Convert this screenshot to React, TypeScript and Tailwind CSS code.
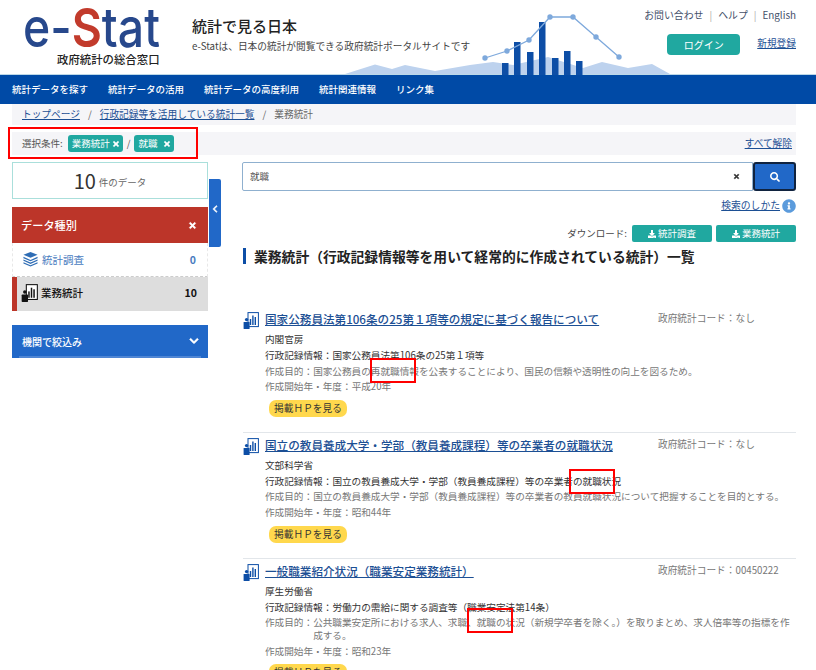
import { FaChevronDown, FaChevronLeft, FaDownload, FaInfoCircle, FaSearch, FaTimes } from 'react-icons/fa';

const navItems = ['統計データを探す', '統計データの活用', '統計データの高度利用', '統計関連情報', 'リンク集'];

const results = [
  {
    title: '国家公務員法第106条の25第１項等の規定に基づく報告について',
    code: 'なし',
    org: '内閣官房',
    info: '国家公務員法第106条の25第１項等',
    purpose: '国家公務員の再就職情報を公表することにより、国民の信頼や透明性の向上を図るため。',
    start: '平成20年',
  },
  {
    title: '国立の教員養成大学・学部（教員養成課程）等の卒業者の就職状況',
    code: 'なし',
    org: '文部科学省',
    info: '国立の教員養成大学・学部（教員養成課程）等の卒業者の就職状況',
    purpose: '国立の教員養成大学・学部（教員養成課程）等の卒業者の教員就職状況について把握することを目的とする。',
    start: '昭和44年',
  },
  {
    title: '一般職業紹介状況（職業安定業務統計）',
    code: '00450222',
    org: '厚生労働省',
    info: '労働力の需給に関する調査等（職業安定法第14条）',
    purpose: '公共職業安定所における求人、求職、就職の状況（新規学卒者を除く。）を取りまとめ、求人倍率等の指標を作成する。',
    start: '昭和23年',
  },
];

function HeaderChart() {
  const line = [[485, 58], [507, 51], [529, 40], [550, 17], [573, 17], [596, 37], [619, 57]];
  const bars = [[502, 63], [514, 42], [527, 52], [539, 22], [552, 58], [564, 51], [576, 61]];
  return (
    <svg className="absolute left-[340px] top-0 h-[75px] w-[340px]" viewBox="340 0 340 75">
      <polygon
        points="345,74 375,64.5 392,69 405,65 435,71 470,65 493,62 513,65 548,57 567,63 583,68 602,62 628,68 652,64 670,74"
        fill="#bdd2ee"
      />
      {bars.map(([x, y]) => (
        <rect key={x} x={x} y={y} width="6.5" height={75 - y} fill="#0d4ea6" />
      ))}
      <polyline points={line.map((p) => p.join(',')).join(' ')} fill="none" stroke="#7ea9dc" strokeWidth="1.3" />
      {line.map(([x, y]) => (
        <circle key={x} cx={x} cy={y} r="2.7" fill="#7ea9dc" />
      ))}
    </svg>
  );
}

// one text squeezed to the width of the real e-Stat mark
function Logo() {
  return (
    <svg viewBox="0 0 168 50" className="h-[50px] w-[168px]" style={{ fontFamily: '"Inter", sans-serif' }}>
      <text x="-1" y="47" fontSize="54" fontWeight="500" fill="#27488c" textLength="137" lengthAdjust="spacingAndGlyphs">
        e-<tspan fill="#c23b2c" fontWeight="600">S</tspan>tat
      </text>
    </svg>
  );
}

function StackIcon() {
  return (
    <svg viewBox="0 0 18 17" className="h-[15px] w-[17px]" fill="#2f6db5">
      <polygon points="9,0 17,3 9,6.5 1,3" />
      <path d="M1 5.5 L9 9 L17 5.5 V7 L9 10.5 L1 7Z" />
      <path d="M1 8.5 L9 12 L17 8.5 V10 L9 13.5 L1 10Z" />
      <path d="M1 11.5 L9 15 L17 11.5 V13 L9 16.5 L1 13Z" />
    </svg>
  );
}

function BizIcon({ color, frame, big }: { color: string; frame: string; big?: boolean }) {
  return (
    <svg viewBox="0 0 16 17" className={big ? 'h-[18px] w-[17px]' : 'h-[17px] w-[16px]'}>
      <rect x="5" y="0.6" width="10.4" height="14" fill="#fff" stroke={frame} strokeWidth="1" />
      <rect x="6.8" y="7" width="1.4" height="6" fill={color} />
      <rect x="9.2" y="3.5" width="1.4" height="9.5" fill={color} />
      <rect x="11.6" y="5" width="1.4" height="8" fill={color} />
      <circle cx="3.6" cy="7.6" r="1.7" fill={color} />
      <rect x="0.6" y="10" width="6" height="7" rx="0.6" fill={color} />
    </svg>
  );
}

function Tag({ label, width }: { label: string; width: string }) {
  return (
    <span className={`flex h-[17px] items-center justify-between rounded-[3px] bg-[#20a8a0] pl-[4px] pr-[3px] text-[9.5px] text-white ${width}`}>
      {label}
      <FaTimes className="h-[8px] w-[8px] stroke-current stroke-[30]" />
    </span>
  );
}

function ResultRow({ item }: { item: (typeof results)[number] }) {
  return (
    <div className="flex border-b border-[#e2e6ea] pt-[4px] pb-[15px]">
      <div className="w-[22px] shrink-0 pt-[1px]">
        <BizIcon color="#0d4ea6" frame="#0d4ea6" />
      </div>
      <div className="min-w-0 flex-1">
        <div className="flex h-[18px] items-center">
          <a className="flex-1 text-[11.6px] font-medium text-[#1c4f94] underline">{item.title}</a>
          <span className="mb-[3px] w-[138px] shrink-0 text-[9.7px] text-[#777]">政府統計コード：{item.code}</span>
        </div>
        <div className="mt-[3px] text-[9.65px] leading-[13px] text-[#333]">
          <p className="py-[1.35px]">{item.org}</p>
          <p className="py-[1.35px]">行政記録情報：{item.info}</p>
          <div className="flex py-[1.35px] text-[#777]">
            <span className="shrink-0">作成目的：</span>
            <span>{item.purpose}</span>
          </div>
          <p className="py-[1.35px] text-[#777]">作成開始年・年度：{item.start}</p>
        </div>
        <a className="ml-[4px] mt-[5px] flex h-[17px] w-[78px] items-center justify-center rounded-[7px] bg-[#ffd84d] text-[9.7px] text-[#333]">
          掲載ＨＰを見る
        </a>
      </div>
    </div>
  );
}

export default function App() {
  return (
    <div
      className="relative h-[670px] w-[816px] overflow-hidden bg-white text-[#333]"
      style={{ fontFamily: '"Noto Sans CJK JP", sans-serif' }}
    >
      {/* Header */}
      <header className="relative flex h-[75px] border-b border-[#bcd8e8]">
        <HeaderChart />
        <div className="ml-[24px] w-[168px]">
          <Logo />
          <div className="ml-[33px] mt-[2px] text-[11.4px] font-medium leading-[14px] text-[#222]">政府統計の総合窓口</div>
        </div>
        <div className="relative pt-[17px]">
          <h1 className="text-[15px] font-medium leading-[18px] text-[#222]">統計で見る日本</h1>
          <p className="mt-[5px] text-[9.7px] leading-[12px] text-[#444]">e-Statは、日本の統計が閲覧できる政府統計ポータルサイトです</p>
        </div>
        <div className="relative ml-auto mr-[20px] flex w-[160px] flex-col items-end pt-[8px]">
          <div className="flex items-center gap-[6px] text-[9.9px] leading-[14px] text-[#44506a]">
            <span>お問い合わせ</span>
            <span className="text-[#aaa]">|</span>
            <span>ヘルプ</span>
            <span className="text-[#aaa]">|</span>
            <span>English</span>
          </div>
          <div className="mt-[12px] flex items-center gap-[17px]">
            <button className="h-[21px] w-[73px] rounded-[4px] bg-[#20a8a0] text-[10px] text-white">ログイン</button>
            <a className="mb-[2px] text-[9.7px] text-[#1c4f94] underline">新規登録</a>
          </div>
        </div>
      </header>

      {/* Nav */}
      <nav className="flex h-[29px] items-center gap-[20px] bg-[#004aa6] pb-[1px] pl-[12px] text-[9.5px] font-medium text-white">
        {navItems.map((n) => (
          <span key={n}>{n}</span>
        ))}
      </nav>

      {/* Breadcrumb */}
      <div className="ml-[12px] mr-[20px] flex h-[21px] items-center gap-[8px] bg-[#f5f5f8] pb-[1px] pl-[10px] text-[9.7px] text-[#666]">
        <a className="text-[#1c4f94] underline">トップページ</a>
        <span>/</span>
        <a className="text-[#1c4f94] underline">行政記録等を活用している統計一覧</a>
        <span>/</span>
        <span>業務統計</span>
      </div>

      {/* Selected filters */}
      <div className="ml-[12px] mr-[20px] mt-[7px] flex h-[23px] items-center gap-[4px] bg-[#f5f5f8] pl-[10px] pr-[4px] text-[9.5px] text-[#555]">
        <span className="mr-[1px]">選択条件:</span>
        <Tag label="業務統計" width="w-[55px]" />
        <span>/</span>
        <Tag label="就職" width="w-[40px]" />
        <a className="ml-auto text-[9.7px] text-[#1c4f94] underline">すべて解除</a>
      </div>

      <div className="mx-[12px] mt-[7px] flex gap-[35px]">
        {/* Left column */}
        <aside className="relative w-[196px] shrink-0">
          <div className="flex h-[37px] items-center justify-center gap-[3px] border-[1.5px] border-[#aadfdb]">
            <span className="text-[20px] text-[#333]">10</span>
            <span className="mt-[3px] text-[9.5px] text-[#666]">件のデータ</span>
          </div>
          <button className="absolute left-[197px] top-[17px] flex h-[68px] w-[12px] items-center justify-center rounded-r-[2px] bg-[#2168c8] pb-[8px] text-white">
            <FaChevronLeft className="h-[8px] w-[8px] stroke-current stroke-[30]" />
          </button>
          <div className="mt-[8px] flex h-[36px] items-center justify-between bg-[#bc3529] pl-[9px] pr-[11px] text-[11.2px] font-medium text-white">
            データ種別
            <FaTimes className="h-[9px] w-[9px] stroke-current stroke-[30]" />
          </div>
          <div className="flex h-[34px] items-center border-x border-[#e8e8e8] border-b border-b-[#ccc] border-dashed pl-[9px] pr-[11px] text-[10.5px] text-[#4a7cc0]">
            <StackIcon />
            <span className="ml-[3px] flex-1">統計調査</span>
            <span className="font-bold">0</span>
          </div>
          <div className="flex h-[34px] items-center border-l-[5px] border-[#bc3529] bg-[#dddddd] pb-[2px] pl-[4px] pr-[11px] text-[10.5px] font-medium text-[#111]">
            <BizIcon color="#111" frame="#111" big />
            <span className="ml-[3px] flex-1">業務統計</span>
            <span className="font-bold">10</span>
          </div>
          <div className="relative mt-[14px] flex h-[33px] items-center justify-between bg-[#2168c8] pb-[1px] pl-[10px] pr-[9px] text-[10px] font-medium text-white">
            機関で絞込み
            <FaChevronDown className="h-[10px] w-[10px] stroke-current stroke-[30]" />
            <div className="absolute bottom-0 left-[7px] right-[7px] h-[2px] bg-[#4f86d4]" />
          </div>
        </aside>

        {/* Right column */}
        <main className="w-[553px] shrink-0">
          <div className="flex h-[29px]">
            <div className="-ml-[1px] flex flex-1 items-center justify-between rounded-l-[2px] border border-[#8fb0cf] pb-[1px] pl-[7px] pr-[12px] text-[9.5px] text-[#555]">
              就職
              <FaTimes className="h-[7px] w-[7px] stroke-current stroke-[30] text-[#333]" />
            </div>
            <button className="flex w-[43px] items-center justify-center rounded-[3px] border-2 border-[#10233f] bg-[#2168c8] text-white">
              <FaSearch className="h-[10px] w-[10px]" />
            </button>
          </div>
          <div className="mt-[7px] flex h-[15px] items-center justify-end gap-[2px] text-[9.8px]">
            <a className="text-[#1c4f94] underline">検索のしかた</a>
            <FaInfoCircle className="h-[14px] w-[14px] text-[#5b9bdc]" />
          </div>
          <div className="mt-[12px] flex h-[17px] items-center justify-end gap-[4px] text-[9.5px] text-[#444]">
            <span className="mr-[1px]">ダウンロード:</span>
            {['統計調査', '業務統計'].map((d) => (
              <button key={d} className="flex h-[17px] w-[80px] items-center justify-center gap-[2px] rounded-[2px] bg-[#20a8a0] text-[9.5px] text-white">
                <FaDownload className="h-[8px] w-[8px]" />
                {d}
              </button>
            ))}
          </div>
          <h2 className="mt-[6px] flex h-[16px] items-center border-l-[3px] border-[#0d4ea6] pl-[8px] text-[13.8px] font-bold leading-[16px] text-[#222]">
            業務統計（行政記録情報等を用いて経常的に作成されている統計）一覧
          </h2>
          <div className="mt-[43px]">
            {results.map((r) => (
              <ResultRow key={r.title} item={r} />
            ))}
          </div>
        </main>
      </div>

      {/* Red annotation boxes */}
      <div className="absolute left-[8px] top-[127px] h-[32px] w-[190px] border-2 border-[#f00]" />
      <div className="absolute left-[370px] top-[358px] h-[25px] w-[46px] border-2 border-[#f00]" />
      <div className="absolute left-[569px] top-[469px] h-[25px] w-[46px] border-2 border-[#f00]" />
      <div className="absolute left-[467px] top-[608px] h-[25px] w-[46px] border-2 border-[#f00]" />
    </div>
  );
}
